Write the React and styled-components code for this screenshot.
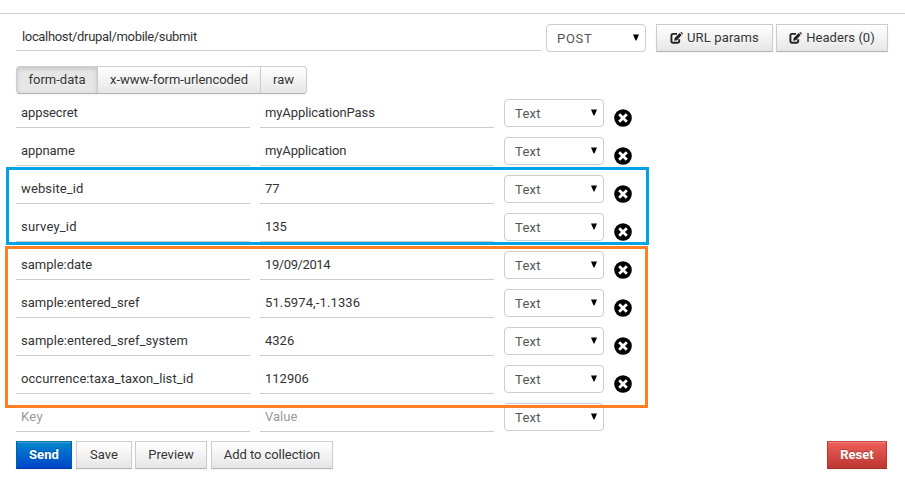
import React from "react";
import styled, { createGlobalStyle, css } from "styled-components";

const Global = createGlobalStyle`
  *, *::before, *::after { box-sizing: border-box; }
  body { margin: 0; background: #fff; }
  input::placeholder { color: #999; opacity: 1; }
`;

const Page = styled.main`
  position: relative;
  width: 905px;
  height: 483px;
  padding-top: 13px;
  overflow: hidden;
  background: #fff;
  color: #333;
  font: 13px/18px Roboto, "Liberation Sans", sans-serif;
`;

const Panel = styled.div`
  border-top: 1px solid #ccc;
  padding: 10px 18px 0 16px;
`;

const RequestBar = styled.div`
  display: flex;
  width: 872px;
  height: 28px;
`;

const Field = styled.input`
  flex: none;
  width: ${(p) => p.$w}px;
  height: ${(p) => p.$h || 29}px;
  margin: 0 ${(p) => p.$gap}px 0 0;
  padding: 0 5px 1px ${(p) => p.$inset || 5}px;
  border: 0;
  border-bottom: 1px solid #ccc;
  outline: 0;
  background: transparent;
  color: #333;
  font: inherit;
  letter-spacing: ${(p) => p.$ls || 0}px;
`;

const SelectBox = styled.button`
  display: flex;
  flex: none;
  align-items: center;
  justify-content: space-between;
  width: 100px;
  height: 28px;
  margin: 0 10px 0 0;
  padding: 1px 6px 0 10px;
  border: 1px solid #ccc;
  border-radius: 4px;
  background: #fff;
  color: #555;
  font: inherit;
  letter-spacing: ${(p) => p.$ls || 0}px;
`;

const Arrow = styled.svg`
  width: 6px;
  height: 7px;
  margin-top: -2px;
  fill: #000;
`;

const tones = {
  plain: css`
    border-color: #ccc #ccc #b3b3b3;
    background: linear-gradient(#fff, #e6e6e6);
    color: #333;
    text-shadow: 0 1px 1px rgba(255, 255, 255, 0.75);
  `,
  primary: css`
    border-color: #0074b8 #0061b0 #0038a0;
    background: linear-gradient(#0088cc, #0044cc);
    color: #fff;
    font-weight: 700;
    text-shadow: 0 -1px 0 rgba(0, 0, 0, 0.25);
  `,
  danger: css`
    border-color: #c84a46 #bd362f #a52f29;
    background: linear-gradient(#ee5f5b, #bd362f);
    color: #fff;
    font-weight: 700;
    text-shadow: 0 -1px 0 rgba(0, 0, 0, 0.25);
  `,
};

const Button = styled.button`
  display: flex;
  align-items: center;
  justify-content: center;
  flex: none;
  width: ${(p) => p.$w}px;
  height: 28px;
  margin: 0 ${(p) => p.$gap || 0}px 0 0;
  padding: 0 0 1px;
  border: 1px solid;
  box-shadow: inset 0 1px 0 rgba(255, 255, 255, 0.2), 0 1px 2px rgba(0, 0, 0, 0.05);
  font: inherit;
  letter-spacing: ${(p) => p.$ls || 0}px;
  white-space: nowrap;
  ${(p) => tones[p.$tone || "plain"]}
`;

const Tabs = styled.div`
  display: flex;
  margin-top: 14px;
`;

const Tab = styled(Button)`
  & + & { margin-left: -1px; }
  &:first-child { border-radius: 4px 0 0 4px; }
  &:last-child { border-radius: 0 4px 4px 0; }
  ${(p) => p.$active && css`
    background: #e6e6e6;
    box-shadow: inset 0 2px 4px rgba(0, 0, 0, 0.15), 0 1px 2px rgba(0, 0, 0, 0.05);
  `}
`;

const Rows = styled.div`
  padding-top: 5px;
`;

const Row = styled.div`
  display: flex;
  height: 38px;
`;

const DeleteButton = styled.button`
  width: 18px;
  height: 18px;
  margin: 10px 0 0;
  padding: 0;
  border: 0;
  background: none;
  svg { display: block; }
`;

const EditIcon = styled.svg`
  width: 13px;
  height: 12px;
  margin: 1px 4px 0 0;
`;

const Actions = styled.div`
  display: flex;
`;

const Spacer = styled.div`
  flex: 1;
`;

const Highlight = styled.div`
  position: absolute;
  left: ${(p) => p.$x}px;
  top: ${(p) => p.$y}px;
  width: 643px;
  height: ${(p) => p.$h}px;
  border: 3px solid ${(p) => p.$color};
  pointer-events: none;
`;

const Select = ({ children, ls }) => (
  <SelectBox $ls={ls}>
    {children}
    <Arrow viewBox="0 0 6 7"><path d="M0 .5h6L3.4 6.5h-.8z" /></Arrow>
  </SelectBox>
);

const Edit = () => (
  <EditIcon viewBox="0 0 13 12">
    <path d="M7 1.9H3.2Q1.4 1.9 1.4 3.7V8.9Q1.4 10.7 3.2 10.7H7.4Q9.2 10.7 9.2 8.9V7.2" fill="none" stroke="#222" strokeWidth="1.9" />
    <path d="M4.2 8.8l.5-2.9 5-4.8 2 2L7 8.2zM10.4.6l.4-.4q.4-.3.8 0l1.1 1.1q.4.4 0 .8l-.4.4z" fill="#222" />
  </EditIcon>
);

const rows = [
  { key: "appsecret", value: "myApplicationPass", keyLs: -0.08, valueLs: -0.1 },
  { key: "appname", value: "myApplication", keyLs: -0.06, valueLs: -0.12 },
  { key: "website_id", value: "77", keyLs: 0.12 },
  { key: "survey_id", value: "135", keyLs: 0.2 },
  { key: "sample:date", value: "19/09/2014", valueLs: -0.4 },
  { key: "sample:entered_sref", value: "51.5974,-1.1336", keyLs: 0.04, valueLs: 0.12 },
  { key: "sample:entered_sref_system", value: "4326", keyLs: 0.05 },
  { key: "occurrence:taxa_taxon_list_id", value: "112906", keyLs: 0.07 },
  { key: "", value: "", keyLs: 0.3 },
];

export default function App() {
  return (
    <Page>
      <Global />
      <Panel>
        <RequestBar>
          <Field $w={525} $h={27} $gap={5} $inset={6} $ls={-0.34} defaultValue="localhost/drupal/mobile/submit" />
          <Select ls={0.7}>POST</Select>
          <Button $w={117} $gap={3} $ls={0.16}><Edit />URL params</Button>
          <Button $w={112} $ls={0.05}><Edit />Headers (0)</Button>
        </RequestBar>
        <Tabs>
          <Tab $w={82} $active>form-data</Tab>
          <Tab $w={164} $ls={-0.04}>x-www-form-urlencoded</Tab>
          <Tab $w={47}>raw</Tab>
        </Tabs>
        <Rows>
          {rows.map(({ key, value, keyLs, valueLs }, i) => (
            <Row key={i}>
              <Field $w={234} $gap={10} $ls={keyLs} defaultValue={key} placeholder="Key" />
              <Field $w={234} $gap={10} $ls={valueLs} defaultValue={value} placeholder="Value" />
              <Select ls={0.25}>Text</Select>
              {key && (
                <DeleteButton aria-label="Delete">
                  <svg width="18" height="18" viewBox="0 0 18 18">
                    <circle cx="9" cy="9" r="8.8" fill="#000" />
                    <path d="M5.2 5.2l7.6 7.6M12.8 5.2l-7.6 7.6" stroke="#fff" strokeWidth="2.8" />
                  </svg>
                </DeleteButton>
              )}
            </Row>
          ))}
        </Rows>
        <Actions>
          <Button $w={56} $gap={4} $tone="primary" $ls={0.1}>Send</Button>
          <Button $w={56} $gap={3}>Save</Button>
          <Button $w={72} $gap={4}>Preview</Button>
          <Button $w={122} $ls={-0.06}>Add to collection</Button>
          <Spacer />
          <Button $w={60} $tone="danger">Reset</Button>
        </Actions>
      </Panel>
      <Highlight $x={6} $y={167} $h={78} $color="#00a2e8" />
      <Highlight $x={5} $y={246} $h={162} $color="#ff7f27" />
    </Page>
  );
}
